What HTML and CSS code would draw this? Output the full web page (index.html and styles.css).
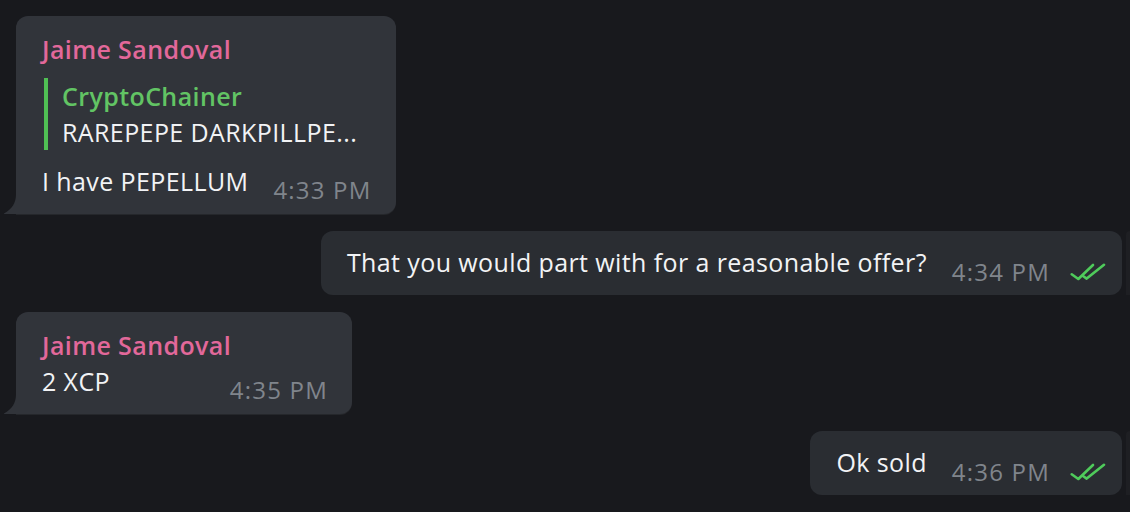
FILE: index.html
```html
<!DOCTYPE html>
<html>
<head>
<meta charset="utf-8">
<link rel="stylesheet" href="styles.css">
</head>
<body>
<div class="chat">
  <div class="row in">
    <div class="bubble incoming">
      <svg class="tail-in" width="14" height="20" viewBox="0 0 14 20"><path d="M12 0 C12 9 8 15 0 19.5 L0 20 L14 20 L14 0 Z"/></svg>
      <div class="name">Jaime Sandoval</div>
      <div class="quote">
        <div class="quote-author">CryptoChainer</div>
        <div class="quote-text">RAREPEPE DARKPILLPE...</div>
      </div>
      <div class="text-row after-quote">
        <span class="text">I have PEPELLUM</span>
        <span class="meta in-meta"><span class="time">4:33 PM</span></span>
      </div>
    </div>
  </div>

  <div class="row out">
    <div class="bubble outgoing">
      <div class="text-row">
        <span class="text">That you would part with for a reasonable offer?</span>
        <span class="meta out-meta">
          <span class="time">4:34 PM</span>
          <svg class="checks" width="38" height="18" viewBox="0 0 38 18"><path d="M2.7 11.3 L9.3 16 L24 2"/><path d="M14 13 L17.7 15.6 L35 1.8"/></svg>
        </span>
      </div>
    </div>
    <div class="edge"></div>
  </div>

  <div class="row in">
    <div class="bubble incoming wide">
      <svg class="tail-in" width="14" height="20" viewBox="0 0 14 20"><path d="M12 0 C12 9 8 15 0 19.5 L0 20 L14 20 L14 0 Z"/></svg>
      <div class="name">Jaime Sandoval</div>
      <div class="text-row after-name">
        <span class="text">2 XCP</span>
        <span class="meta in-meta"><span class="time">4:35 PM</span></span>
      </div>
    </div>
  </div>

  <div class="row out">
    <div class="bubble outgoing">
      <div class="text-row">
        <span class="text">Ok sold</span>
        <span class="meta out-meta">
          <span class="time">4:36 PM</span>
          <svg class="checks" width="38" height="18" viewBox="0 0 38 18"><path d="M2.7 11.3 L9.3 16 L24 2"/><path d="M14 13 L17.7 15.6 L35 1.8"/></svg>
        </span>
      </div>
    </div>
    <div class="edge"></div>
  </div>
</div>
</body>
</html>
```

FILE: styles.css
```css
html, body {
  margin: 0;
  padding: 0;
  background: #18191d;
  width: 1130px;
  height: 512px;
  overflow: hidden;
}

body {
  font-family: "Open Sans", "Noto Sans", sans-serif;
  color: #f2f3f5;
}

.chat {
  display: flex;
  flex-direction: column;
  gap: 17px;
  padding: 16px 0 0 16px;
}

.row {
  display: flex;
}

.row.in {
  align-self: flex-start;
}

.row.out {
  align-self: flex-end;
  gap: 4px;
}

.bubble {
  position: relative;
  border-radius: 12px;
  box-sizing: border-box;
}

.incoming {
  background: #31343a;
  border-bottom-left-radius: 0;
  padding: 17px 24px 16px 26px;
  box-shadow: 0 1px 0 #25272b;
}

.incoming.wide {
  min-width: 336px;
}

.outgoing {
  background: #2a2d32;
  padding: 14px 15px 16px 26px;
}

.edge {
  width: 4px;
  border-radius: 8px 0 0 0;
  background: #1e1f23;
}

.tail-in {
  position: absolute;
  left: -12px;
  bottom: 0;
  fill: #31343a;
}

.name {
  font-size: 25px;
  font-weight: 600;
  line-height: 32px;
  letter-spacing: 0.4px;
  color: #e2689a;
  white-space: nowrap;
}

.quote {
  margin: 13px 0 0 2px;
  border-left: 4px solid #50bf54;
  padding-left: 14px;
  font-size: 25px;
  line-height: 36px;
  letter-spacing: 0.4px;
  white-space: nowrap;
}

.quote-author {
  color: #62c464;
  font-weight: 600;
}

.quote-text {
  color: #f2f3f5;
}

.text-row {
  display: flex;
  align-items: flex-end;
  justify-content: space-between;
  gap: 25px;
}

.text-row.after-quote {
  margin-top: 14px;
}

.text-row.after-name {
  margin-top: 3px;
}

.text {
  font-size: 25px;
  line-height: 34px;
  letter-spacing: 0.4px;
  white-space: nowrap;
}

.meta {
  display: flex;
  align-items: center;
  gap: 19px;
}

.in-meta {
  margin-bottom: -3px;
}

.out-meta {
  margin-bottom: -4px;
}

.time {
  font-size: 24px;
  line-height: 22px;
  letter-spacing: 1.2px;
  color: #80858c;
  white-space: nowrap;
}

.checks {
  fill: none;
  stroke: #4fcb5b;
  stroke-width: 2.6;
  stroke-linecap: round;
  stroke-linejoin: round;
}
```
